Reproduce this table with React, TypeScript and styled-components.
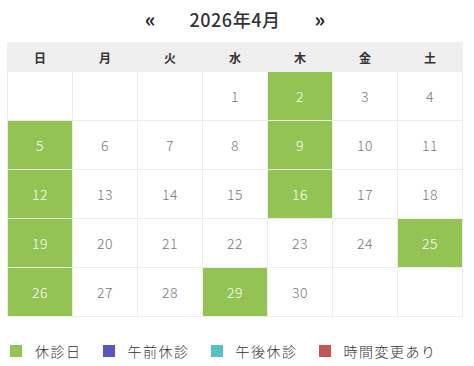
import React from "react";
import styled, { createGlobalStyle } from "styled-components";

const GlobalStyle = createGlobalStyle`
  body {
    margin: 0;
    background: #fff;
    font-family: "Noto Sans CJK JP", "Noto Sans", sans-serif;
  }
`;

const Wrapper = styled.div`
  width: 456px;
  padding: 0 11px 0 7px;
`;

const MonthNav = styled.div`
  display: flex;
  align-items: center;
  justify-content: center;
  height: 38px;
  margin-bottom: 4px;
  color: #333;
`;

const Arrow = styled.span`
  font-size: 20px;
  font-weight: bold;
  line-height: 1;
  padding: 0 34px;
  color: #222;
`;

const MonthTitle = styled.h2`
  margin: 0;
  font-size: 18px;
  font-weight: 500;
  letter-spacing: 0.5px;
  color: #333;
`;

const Table = styled.table`
  width: 456px;
  border-collapse: collapse;
  table-layout: fixed;
`;

const HeadCell = styled.th`
  height: 28px;
  padding: 0;
  background: #efefef;
  border: 1px solid #efefef;
  font-size: 12px;
  font-weight: bold;
  color: #333;
`;

const DayCell = styled.td<{ $closed?: boolean }>`
  height: 48px;
  padding: 0;
  border: 1px solid #ececec;
  text-align: center;
  font-size: 14px;
  font-weight: 300;
  color: ${(p) => (p.$closed ? "#fff" : "#777")};
  background: ${(p) => (p.$closed ? "#93c353" : "#fff")};
  letter-spacing: 0.5px;
`;

const Legend = styled.ul`
  display: flex;
  align-items: center;
  list-style: none;
  margin: 24px 0 0 3px;
  padding: 0;
  gap: 21px;
`;

const LegendItem = styled.li`
  display: flex;
  align-items: center;
  gap: 13px;
  font-size: 14px;
  font-weight: 300;
  letter-spacing: 1.5px;
  color: #333;
`;

const Swatch = styled.span<{ $color: string }>`
  width: 12px;
  height: 12px;
  background: ${(p) => p.$color};
`;

const weekdays = ["日", "月", "火", "水", "木", "金", "土"];
const closedDays = [2, 5, 9, 12, 16, 19, 25, 26, 29];

const legend = [
  { label: "休診日", color: "#93c353" },
  { label: "午前休診", color: "#5b55c4" },
  { label: "午後休診", color: "#55c4c0" },
  { label: "時間変更あり", color: "#c45555" },
];

function buildWeeks() {
  const offset = 3;
  const cells: (number | null)[] = [];
  for (let i = 0; i < offset; i++) cells.push(null);
  for (let d = 1; d <= 30; d++) cells.push(d);
  while (cells.length % 7 !== 0) cells.push(null);
  const weeks: (number | null)[][] = [];
  for (let i = 0; i < cells.length; i += 7) weeks.push(cells.slice(i, i + 7));
  return weeks;
}

function App() {
  const weeks = buildWeeks();

  return (
    <Wrapper>
      <GlobalStyle />
      <MonthNav>
        <Arrow>«</Arrow>
        <MonthTitle>2026年4月</MonthTitle>
        <Arrow>»</Arrow>
      </MonthNav>
      <Table>
        <thead>
          <tr>
            {weekdays.map((w) => (
              <HeadCell key={w}>{w}</HeadCell>
            ))}
          </tr>
        </thead>
        <tbody>
          {weeks.map((week, i) => (
            <tr key={i}>
              {week.map((d, j) => (
                <DayCell key={j} $closed={d !== null && closedDays.includes(d)}>
                  {d ?? ""}
                </DayCell>
              ))}
            </tr>
          ))}
        </tbody>
      </Table>
      <Legend>
        {legend.map((l) => (
          <LegendItem key={l.label}>
            <Swatch $color={l.color} />
            {l.label}
          </LegendItem>
        ))}
      </Legend>
    </Wrapper>
  );
}

export default App;
